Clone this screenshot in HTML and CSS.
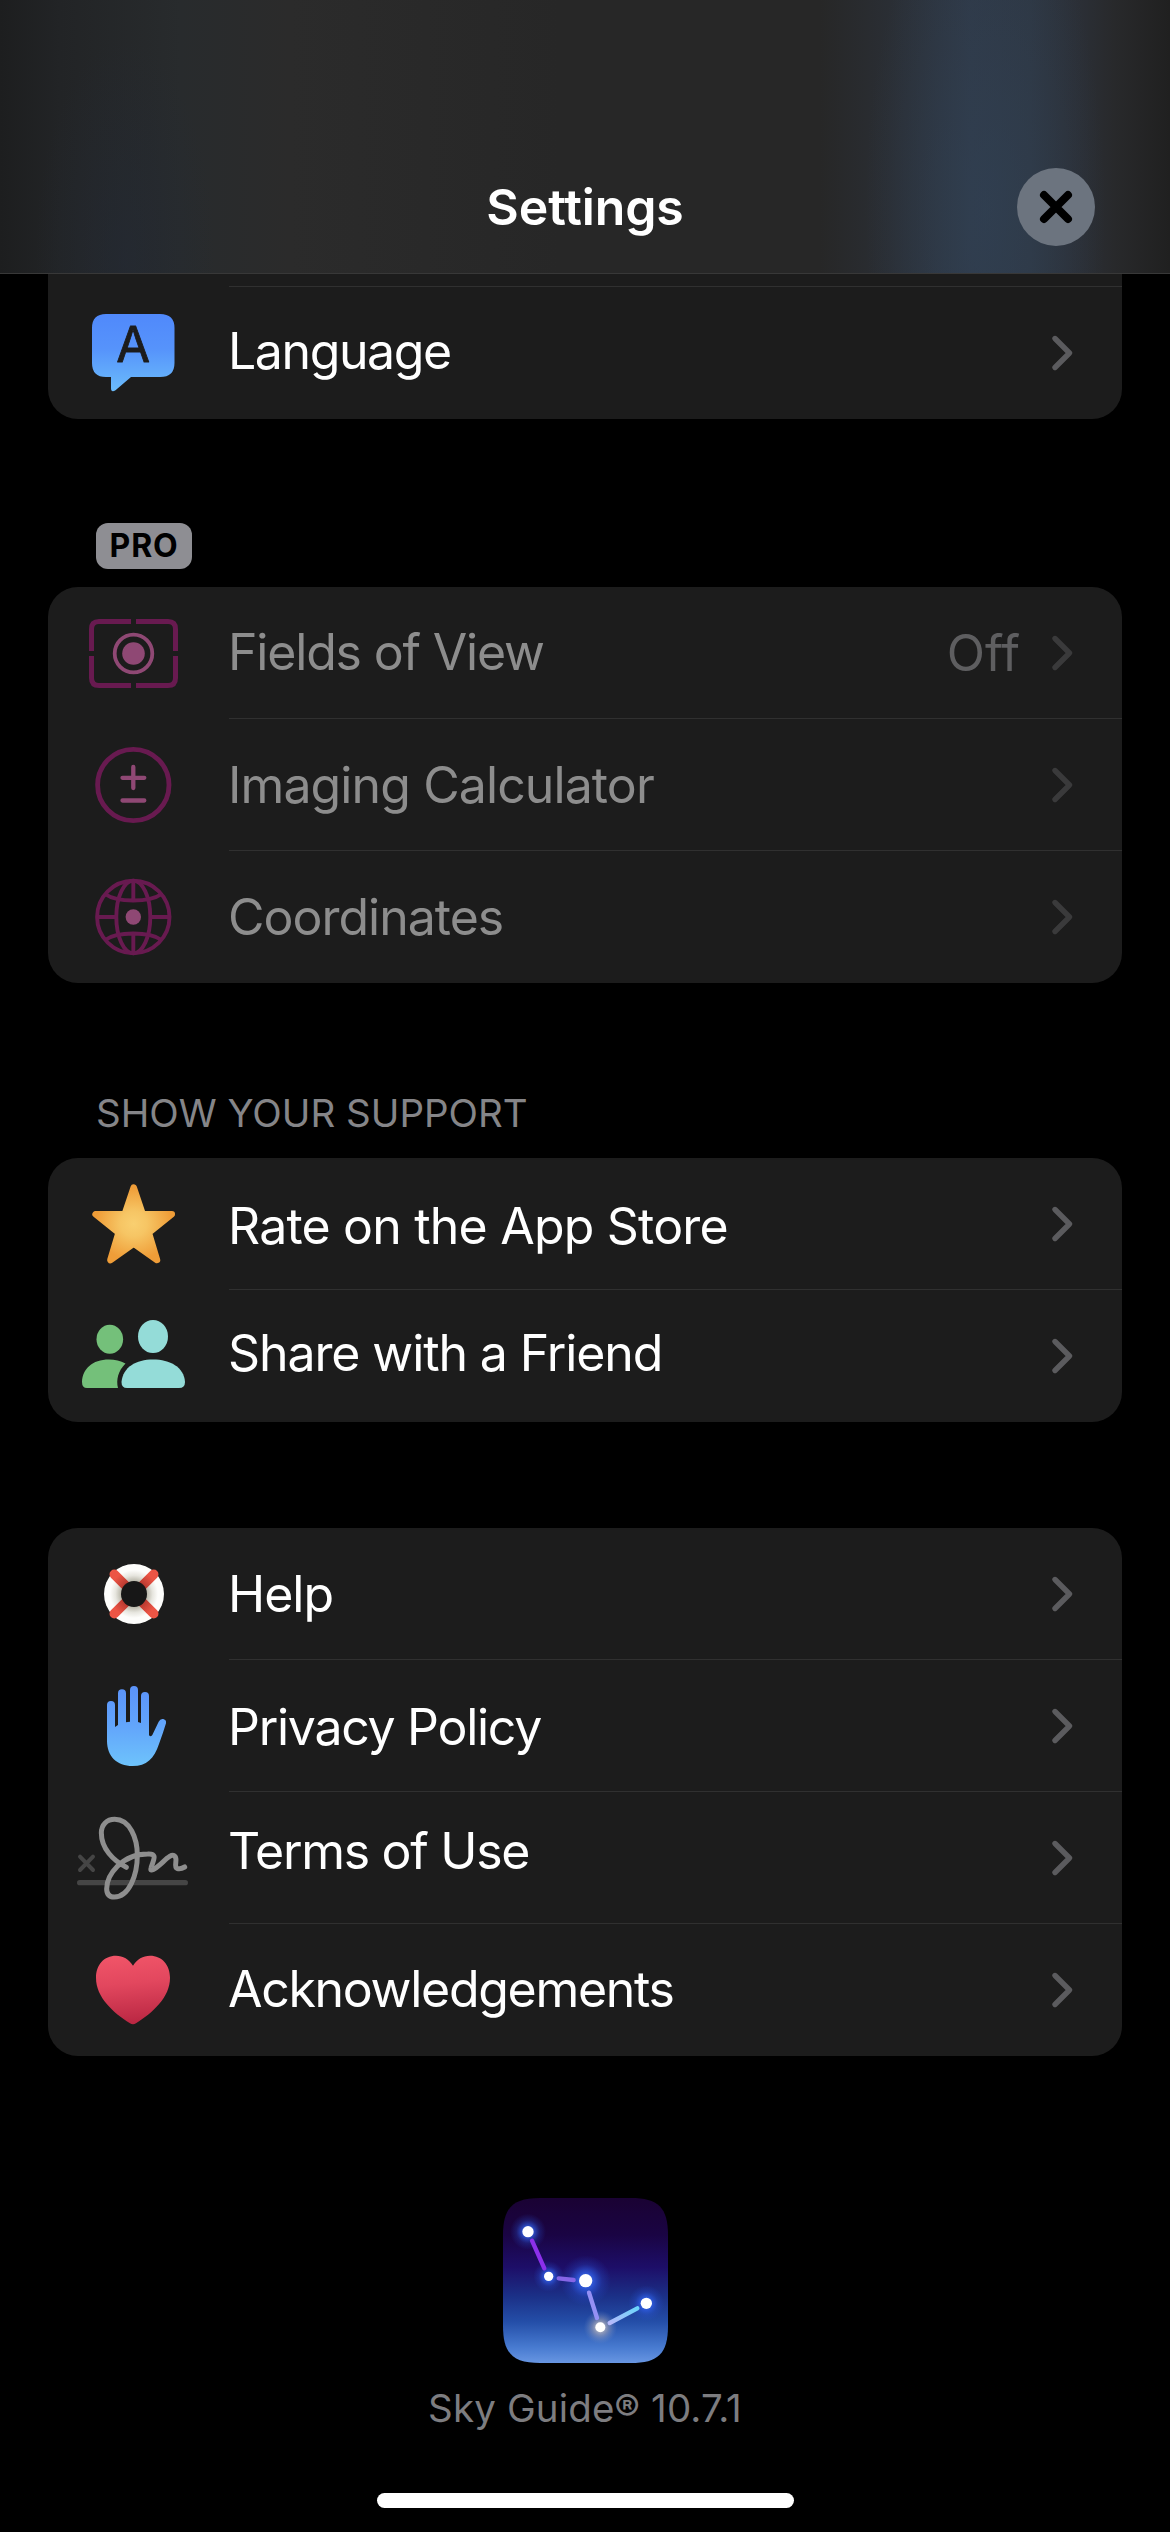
FILE: index.html
```html
<!DOCTYPE html>
<html lang="en">
<head>
<meta charset="utf-8">
<title>Settings</title>
<link rel="stylesheet" href="styles.css">
</head>
<body>
<svg class="defs" width="0" height="0" aria-hidden="true">
  <defs>
    <symbol id="chevron" viewBox="0 0 24 38"><path d="M5 4.5 19.5 19 5 33.5" fill="none" stroke="currentColor" stroke-width="5.4" stroke-linecap="round" stroke-linejoin="round"/></symbol>
    <linearGradient id="blue" x1="0" y1="0" x2="0" y2="1"><stop offset="0" stop-color="#5089fb"/><stop offset=".45" stop-color="#5693fb"/><stop offset="1" stop-color="#6bbcfb"/></linearGradient>
    <linearGradient id="handBlue" x1="0" y1="0" x2="0" y2="1"><stop offset="0" stop-color="#5b93fa"/><stop offset=".5" stop-color="#62a5fb"/><stop offset="1" stop-color="#6ec3fb"/></linearGradient>
    <radialGradient id="gold"><stop offset="0" stop-color="#f9cf70"/><stop offset=".35" stop-color="#f6c564"/><stop offset="1" stop-color="#ef9d38"/></radialGradient>
    <radialGradient id="ring"><stop offset=".43" stop-color="#b9b7aa"/><stop offset=".62" stop-color="#e7e6df"/><stop offset=".8" stop-color="#fdfdfb"/></radialGradient>
    <radialGradient id="ringRed" gradientUnits="userSpaceOnUse" cx="86" cy="66" r="32"><stop offset=".4" stop-color="#b83a30"/><stop offset=".75" stop-color="#ec5545"/></radialGradient>
    <linearGradient id="rose" x1=".45" y1="0" x2=".55" y2="1"><stop offset="0" stop-color="#f05468"/><stop offset=".4" stop-color="#e2475e"/><stop offset="1" stop-color="#b92642"/></linearGradient>
    <linearGradient id="sky" x1="0" y1="0" x2="0" y2="1"><stop offset="0" stop-color="#1a0233"/><stop offset=".22" stop-color="#1a0443"/><stop offset=".42" stop-color="#1d0e68"/><stop offset=".6" stop-color="#1b3188"/><stop offset=".75" stop-color="#244ea8"/><stop offset=".9" stop-color="#4679cf"/><stop offset="1" stop-color="#6896e2"/></linearGradient>
    <radialGradient id="glow"><stop offset="0" stop-color="#4a80ff"/><stop offset=".35" stop-color="#3162ee" stop-opacity=".7"/><stop offset=".65" stop-color="#2a58e0" stop-opacity=".25"/><stop offset="1" stop-color="#2450d8" stop-opacity="0"/></radialGradient>
    <radialGradient id="warmGlow"><stop offset="0" stop-color="#e9dfd0"/><stop offset=".5" stop-color="#a9a6b4" stop-opacity=".5"/><stop offset="1" stop-color="#6d88c0" stop-opacity="0"/></radialGradient>
    <linearGradient id="iceLine" x1="0" y1="1" x2="1" y2="0"><stop offset="0" stop-color="#b7b9fb"/><stop offset="1" stop-color="#6bd5fb"/></linearGradient>
  </defs>
</svg>

<div class="screen">
  <header class="header">
    <h1 class="title">Settings</h1>
    <button class="close" aria-label="Close">
      <svg viewBox="0 0 78 78"><path d="M27 27 51 51M51 27 27 51" stroke="#000" stroke-width="8" stroke-linecap="round"/></svg>
    </button>
  </header>

  <main class="content">
    <section class="card card-top">
      <div class="row language">
        <svg class="icon" viewBox="0 0 172 132">
          <path d="M58 27H112Q126.500 27 126.500 41V76Q126.500 90 112 90H83L67.500 103.300Q63 106 63 101V90H58Q44 90 44 76V41Q44 27 58 27Z" fill="url(#blue)"/>
          <text class="glyph" x="85.200" y="75.300" text-anchor="middle">A</text>
        </svg>
        <div class="cell"><span class="label">Language</span><svg class="chevron"><use href="#chevron"/></svg></div>
      </div>
    </section>

    <div class="section-head"><span class="pro">PRO</span></div>
    <section class="card disabled">
      <div class="row fields">
        <svg class="icon" viewBox="0 0 172 132" fill="none">
          <path d="M83 34.500H51Q43.500 34.500 43.500 42V64M43.500 69V91Q43.500 98.500 51 98.500H83M88 34.500H120Q127.500 34.500 127.500 42V64M127.500 69V91Q127.500 98.500 120 98.500H88" stroke="#681a50" stroke-width="5"/>
          <circle cx="85.500" cy="66.500" r="18.800" stroke="#8f4874" stroke-width="3.800"/><circle cx="85.500" cy="66.500" r="11.300" fill="#8f4874"/>
        </svg>
        <div class="cell"><span class="label">Fields of View</span><span class="value">Off</span><svg class="chevron"><use href="#chevron"/></svg></div>
      </div>
      <div class="row imaging">
        <svg class="icon" viewBox="0 0 172 132" fill="none">
          <circle cx="85.300" cy="66" r="35.700" stroke="#681a50" stroke-width="4.800"/>
          <path d="M74.500 58.800H96.300M85.300 48V69M74.500 81.500H96.300" stroke="#8f4874" stroke-width="4.300" stroke-linecap="round"/>
        </svg>
        <div class="cell"><span class="label">Imaging Calculator</span><svg class="chevron"><use href="#chevron"/></svg></div>
      </div>
      <div class="row coords">
        <svg class="icon" viewBox="0 0 172 132" fill="none">
          <g stroke="#681a50" stroke-width="3.900">
            <circle cx="85.300" cy="66" r="36.200"/><ellipse cx="85.300" cy="66" rx="17" ry="36.200"/>
            <path d="M49 66H68M102 66H121M85.300 30V50M85.300 82V102M57 43Q66 49.500 85.300 49.500T113.600 43M57 89Q66 82.500 85.300 82.500T113.600 89"/>
          </g>
          <circle cx="85.300" cy="66" r="7.700" fill="#8f4874"/>
        </svg>
        <div class="cell"><span class="label">Coordinates</span><svg class="chevron"><use href="#chevron"/></svg></div>
      </div>
    </section>

    <div class="section-head support">SHOW YOUR SUPPORT</div>
    <section class="card">
      <div class="row rate">
        <svg class="icon" viewBox="0 0 172 132">
          <path d="M85.700 29.500 94.700 56.200H123.800L100.800 74.800 109 102 85.700 85.500 62.400 102 70.600 74.800 47.600 56.200H76.700Z" fill="url(#gold)" stroke="url(#gold)" stroke-width="6.500" stroke-linejoin="round"/>
        </svg>
        <div class="cell"><span class="label">Rate on the App Store</span><svg class="chevron"><use href="#chevron"/></svg></div>
      </div>
      <div class="row share">
        <svg class="icon" viewBox="0 0 172 132">
          <g fill="#74c07a"><ellipse cx="61.800" cy="49.300" rx="13.300" ry="14.500"/><path d="M70 98H39Q34 98 34 92C34.500 79 44 69.500 61 69.500Q70 69.500 77.500 73.500C70 81 68 90 70 98Z"/></g>
          <g fill="#94dcd8"><ellipse cx="105" cy="46.500" rx="15" ry="16.500"/><path d="M79 98Q73.500 98 73.500 92C75 77 88 69.500 105 69.500S136 77 137 92Q137 98 131 98Z"/></g>
        </svg>
        <div class="cell"><span class="label">Share with a Friend</span><svg class="chevron"><use href="#chevron"/></svg></div>
      </div>
    </section>

    <section class="card card-about">
      <div class="row help">
        <svg class="icon" viewBox="0 0 172 132">
          <circle cx="86" cy="66" r="30" fill="url(#ring)"/>
          <path d="M66.300 46.300 105.700 85.700M105.700 46.300 66.300 85.700" stroke="url(#ringRed)" stroke-width="9.600" stroke-linecap="round"/>
          <circle cx="86" cy="66" r="13" fill="#171717"/>
        </svg>
        <div class="cell"><span class="label">Help</span><svg class="chevron"><use href="#chevron"/></svg></div>
      </div>
      <div class="row privacy">
        <svg class="icon" viewBox="0 0 172 132">
          <path transform="translate(12 -140) scale(.33333)" d="M141 555A12 12 0 0 1 165 555V621L174 615V520A12 12 0 0 1 198 520V607L210 605V510A12 12 0 0 1 234 510V606L243 609V528A12 12 0 0 1 267 528V645Q271 653 277 645L296 605Q301 595 310 597 320 600 318 610 309 640 297 672C282 716 260 738 218 738 170 738 141 708 141 662Z" fill="url(#handBlue)"/>
        </svg>
        <div class="cell"><span class="label">Privacy Policy</span><svg class="chevron"><use href="#chevron"/></svg></div>
      </div>
      <div class="row terms">
        <svg class="icon" viewBox="0 0 172 132">
          <g transform="translate(12 -2) scale(.33333)" fill="none" stroke-linecap="round" stroke-linejoin="round">
            <path d="M59 278H376" stroke="#454545" stroke-width="16"/>
            <path d="M60 200 99 240M99 200 60 240" stroke="#454545" stroke-width="12"/>
            <path d="M199 232C160 212 124 176 124 129C124 103 141 88 164 88C210 88 232 145 232 196C232 256 207 321 163 321C146 321 140 311 140 296C140 256 185 192 263 192C297 190 277 214 273 235C270 247 285 237 301 223C316 210 335 188 345 199C354 210 340 229 351 235Q361 239 374 231" stroke="#8e8e8e" stroke-width="15"/>
          </g>
        </svg>
        <div class="cell"><span class="label">Terms of Use</span><svg class="chevron"><use href="#chevron"/></svg></div>
      </div>
      <div class="row thanks">
        <svg class="icon" viewBox="0 0 172 132">
          <path transform="translate(12 -134) scale(.33333)" d="M219 527C231 508 249 497 270 497C306 497 330 525 330 563C330 622 279 667 228 700Q219 705 210 700C159 667 108 622 108 563C108 525 132 497 168 497C189 497 207 508 219 527Z" fill="url(#rose)"/>
        </svg>
        <div class="cell"><span class="label">Acknowledgements</span><svg class="chevron"><use href="#chevron"/></svg></div>
      </div>
    </section>

    <footer class="about">
      <svg class="app-icon" viewBox="0 0 495 495">
        <path d="M112 0H383C466 0 495 29 495 112V383C495 466 466 495 383 495H112C29 495 0 466 0 383V112C0 29 29 0 112 0Z" fill="url(#sky)"/>
        <g fill="url(#glow)"><circle cx="75" cy="101" r="54"/><circle cx="137" cy="235" r="46"/><circle cx="248" cy="248" r="76"/><circle cx="430" cy="316" r="54"/></g>
        <circle cx="292" cy="388" r="50" fill="url(#warmGlow)"/>
        <g fill="none" stroke-width="13" stroke-linecap="round">
          <path d="M87 128 124 211" stroke="#8c30ea"/><path d="M167 241 212 246" stroke="#8565e6"/><path d="M258 284 282 360" stroke="#9490f4"/><path d="M320 375 403 331" stroke="url(#iceLine)"/>
        </g>
        <g fill="#fff"><circle cx="75" cy="101" r="17"/><circle cx="137" cy="235" r="14"/><circle cx="248" cy="248" r="20"/><circle cx="430" cy="316" r="17"/><circle cx="292" cy="388" r="15"/></g>
      </svg>
      <p class="version">Sky Guide® 10.7.1</p>
    </footer>
  </main>
  <div class="home-bar"></div>
</div>
</body>
</html>
```
FILE: styles.css
```css
* { box-sizing: border-box; margin: 0; padding: 0; }

body {
  background: #000;
  color: #fff;
  font-family: Inter, "Liberation Sans", sans-serif;
}

.defs { position: absolute; }

.screen {
  width: 1170px;
  height: 2532px;
  display: flex;
  flex-direction: column;
  overflow: hidden;
  background: #000;
}

.header {
  flex: none;
  height: 274px;
  padding: 168px 75px 0;
  display: grid;
  grid-template-columns: 78px 1fr 78px;
  align-items: start;
  border-bottom: 1px solid #383838;
  background:
    radial-gradient(ellipse 90px 220px at 125px 260px, rgba(35, 42, 54, .55), transparent),
    radial-gradient(ellipse 120px 340px at 985px 210px, rgba(49, 66, 86, .6), transparent),
    linear-gradient(90deg, #1d1e1f 0, #222426 60px, #282b2d 180px, #2b2b2b 290px, #272727 560px, #272727 820px, #2a2e34 890px, #2f3947 970px, #2e3743 1030px, #2b2f36 1080px, #28292b 1115px, #202020 1170px);
}

.title {
  grid-column: 2;
  text-align: center;
  font-size: 50px;
  font-weight: 600;
  line-height: 78px;
  letter-spacing: -.1px;
}

.close {
  width: 78px;
  height: 78px;
  border: 0;
  border-radius: 50%;
  background: #6c747f;
}

.close svg { display: block; width: 78px; height: 78px; }

.content { flex: none; padding: 0 48px; }

.card {
  overflow: hidden;
  border-radius: 30px;
  background: #1c1c1c;
}

.card-top { border-radius: 0 0 30px 30px; padding-top: 13px; }
.card-top .cell { box-shadow: 0 -1px #303030; }

.row { display: flex; height: 132px; gap: 9px; }

.icon { flex: none; width: 172px; height: 132px; }

.glyph {
  font-size: 49px;
  fill: #1c1c1c;
  stroke: #1c1c1c;
  stroke-width: .8px;
  stroke-linejoin: round;
}

.cell {
  flex: 1;
  display: flex;
  align-items: center;
  padding-right: 48px;
}

.row + .row .cell { box-shadow: 0 -1px #303030; }

.label {
  flex: 1;
  margin-left: -1px;
  font-size: 50px;
  line-height: 60px;
  white-space: nowrap;
}

.language .label { letter-spacing: -1.4px; padding-bottom: 4px; }
.fields .label { letter-spacing: -1.18px; padding-bottom: 2px; }
.imaging .label { letter-spacing: -.9px; }
.coords .label { letter-spacing: -1px; }
.rate .label { letter-spacing: -.8px; padding-top: 3px; }
.share .label { letter-spacing: -1.1px; padding-bottom: 6px; }
.help .label { letter-spacing: -1px; }
.privacy .label { letter-spacing: -1.28px; padding-top: 2px; }
.terms .label { letter-spacing: -1.3px; padding-bottom: 14px; }
.thanks .label { letter-spacing: -1.3px; padding-bottom: 2px; }

.chevron { width: 24px; height: 38px; color: #5b5b5e; }

.disabled .label { color: #8d8d8d; }
.disabled .chevron { color: #3a3a3b; }

.value { margin-right: 30px; font-size: 50px; line-height: 60px; color: #5e5e60; }

.section-head { height: 168px; padding: 104px 48px 0; }

.pro {
  display: block;
  width: 96px;
  height: 46px;
  border-radius: 12px;
  background: #8e8e93;
  color: #000;
  font-size: 32px;
  font-weight: 700;
  line-height: 46px;
  letter-spacing: .8px;
  text-align: center;
}

.support {
  height: 175px;
  padding-top: 106px;
  color: #858588;
  font-size: 38.500px;
  line-height: 48px;
}

.card-about { margin-top: 106px; }

.about { display: flex; flex-direction: column; align-items: center; padding-top: 142px; }

.app-icon { width: 165px; height: 165px; }

.version { margin-top: 21px; color: #7d7d80; font-size: 38.500px; line-height: 48px; letter-spacing: .15px; }

.home-bar {
  flex: none;
  align-self: center;
  width: 417px;
  height: 15px;
  margin: auto 0 24px;
  border-radius: 8px;
  background: #fff;
}
```
